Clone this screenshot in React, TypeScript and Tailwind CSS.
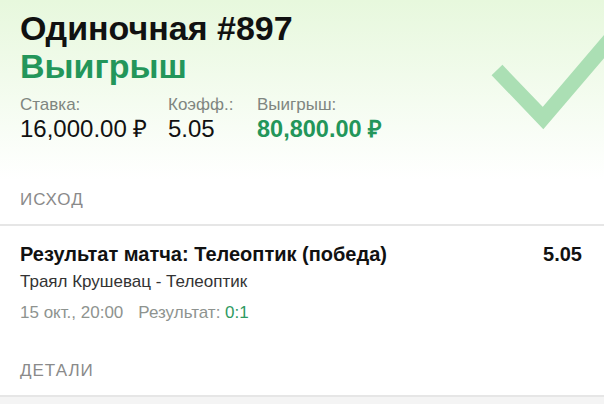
export default function App() {
  return (
    <div className="w-[604px] h-[404px] overflow-hidden bg-white font-['Liberation_Sans',Arial,sans-serif]">
      {/* header */}
      <div className="relative h-[180px] bg-gradient-to-b from-[#e7f8dd] to-white px-5 pt-[9px]">
        <svg className="absolute right-0 top-0" width="130" height="150" viewBox="474 0 130 150">
          <polyline points="497,70 543,118 625,22" fill="none" stroke="#abdfb4" strokeWidth="15" />
        </svg>
        <h1 className="relative text-[34px] leading-[38px] font-bold text-[#111]">Одиночная #897</h1>
        <div className="relative text-[34px] leading-[38px] font-bold text-[#23965a]">Выигрыш</div>
        <div className="relative flex mt-[10px]">
          <div className="w-[148px]">
            <div className="text-[17px] leading-[20px] text-[#7f8680]">Ставка:</div>
            <div className="text-[24px] leading-[28px] text-[#111]">16,000.00 ₽</div>
          </div>
          <div className="w-[89px]">
            <div className="text-[17px] leading-[20px] text-[#7f8680]">Коэфф.:</div>
            <div className="text-[24px] leading-[28px] text-[#111]">5.05</div>
          </div>
          <div>
            <div className="text-[17px] leading-[20px] text-[#7f8680]">Выигрыш:</div>
            <div className="text-[23.5px] leading-[28px] text-[#23965a] font-bold">80,800.00 ₽</div>
          </div>
        </div>
      </div>

      <div className="px-5 h-[44px] pt-[10px] text-[17px] leading-[20px] tracking-[1px] text-[#8a8a8a]">ИСХОД</div>
      <div className="h-[2px] bg-[#e6e6e6]" />

      <div className="px-5 pt-[16px]">
        <div className="flex justify-between">
          <div className="text-[20px] leading-[24px] font-bold text-[#111]">Результат матча: Телеоптик (победа)</div>
          <div className="text-[20px] leading-[24px] font-bold text-[#111] pr-[2px]">5.05</div>
        </div>
        <div className="text-[17px] leading-[20px] text-[#333] mt-[6px]">Траял Крушевац - Телеоптик</div>
        <div className="flex gap-[15px] text-[17px] leading-[20px] text-[#8e938f] mt-[11px]">
          <span>15 окт., 20:00</span>
          <span>
            Результат: <span className="text-[#2f9a62]">0:1</span>
          </span>
        </div>
      </div>

      <div className="px-5 mt-[38px] h-[34px] text-[17px] leading-[20px] tracking-[1px] text-[#8a8a8a]">ДЕТАЛИ</div>
      <div className="h-[2px] bg-[#e6e6e6]" />
      <div className="h-[20px] bg-[#f4f4f4]" />
    </div>
  )
}
